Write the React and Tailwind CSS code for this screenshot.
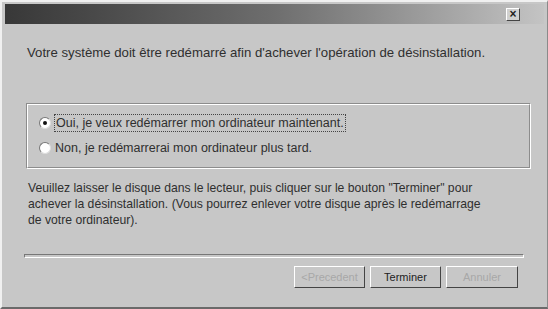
export default function App() {
  const font = { fontFamily: '"Liberation Sans", Arial, sans-serif' };

  return (
    <div
      className="w-[548px] h-[309px] bg-[#c7c7c7] overflow-hidden text-[#2f2f2f]"
      style={font}
    >
      <div className="h-full border-l-2 border-t-2 border-l-[#f0f0f0] border-t-[#f0f0f0] border-r border-r-[#8a8a8a] border-b-2 border-b-[#6a6a6a] pl-[3px] pr-[3px] pt-[2px] flex flex-col">
        {/* Title bar */}
        <div className="h-[20px] flex items-center justify-end pr-[24px] bg-gradient-to-r from-[#383838] via-[#6e6e6e] to-[#c4c4c4]">
          <div className="w-[14px] h-[13px] bg-[#d0d0d0] border border-t-white border-l-white border-r-[#444] border-b-[#444] flex items-center justify-center text-[12px] leading-none font-bold text-[#222]">
            ×
          </div>
        </div>

        {/* Message */}
        <p className="mt-[21px] pl-[22px] text-[13.2px] leading-[16px]">
          Votre système doit être redémarré afin d'achever l'opération de désinstallation.
        </p>

        {/* Options */}
        <div className="mt-[42px] ml-[21px] w-[505px] h-[66px] border border-t-[#8c8c8c] border-l-[#8c8c8c] border-r-white border-b-white">
          <div className="h-full border border-t-white border-l-white border-r-[#8c8c8c] border-b-[#8c8c8c] pl-[11px] pt-[9px] flex flex-col gap-[8px] text-[12.5px] leading-[16px]">
            <label className="flex items-center gap-[3px]">
              <span className="w-[12px] h-[12px] rounded-full bg-white border border-t-[#777] border-l-[#777] border-r-[#ddd] border-b-[#ddd] flex items-center justify-center">
                <span className="w-[4px] h-[4px] rounded-full bg-[#111]" />
              </span>
              <span className="border border-dotted border-[#444] px-[1px]">
                Oui, je veux redémarrer mon ordinateur maintenant.
              </span>
            </label>
            <label className="flex items-center gap-[4px]">
              <span className="w-[12px] h-[12px] rounded-full bg-white border border-t-[#777] border-l-[#777] border-r-[#ddd] border-b-[#ddd]" />
              <span>Non, je redémarrerai mon ordinateur plus tard.</span>
            </label>
          </div>
        </div>

        {/* Info */}
        <p className="mt-[11px] pl-[23px] text-[12.2px] leading-[16px] whitespace-nowrap">
          Veuillez laisser le disque dans le lecteur, puis cliquer sur le bouton "Terminer" pour
          <br />
          achever la désinstallation. (Vous pourrez enlever votre disque après le redémarrage
          <br />
          de votre ordinateur).
        </p>

        {/* Separator */}
        <div className="mt-[26px] ml-[19px] w-[500px] h-[4px] border border-t-[#777] border-l-[#777] border-r-white border-b-white" />

        {/* Buttons */}
        <div className="mt-[8px] flex justify-end gap-[5px] pr-[26px] text-[11px]">
          <button className="w-[71px] h-[22px] bg-[#c7c7c7] border border-t-white border-l-white border-r-[#444] border-b-[#444] text-[#a8a8a8]">
            &lt;Precedent
          </button>
          <button className="w-[71px] h-[22px] bg-[#c7c7c7] border border-t-white border-l-white border-r-[#444] border-b-[#444] text-[#222]">
            Terminer
          </button>
          <button className="w-[72px] h-[22px] bg-[#c7c7c7] border border-t-white border-l-white border-r-[#444] border-b-[#444] text-[#a8a8a8]">
            Annuler
          </button>
        </div>
      </div>
    </div>
  );
}
